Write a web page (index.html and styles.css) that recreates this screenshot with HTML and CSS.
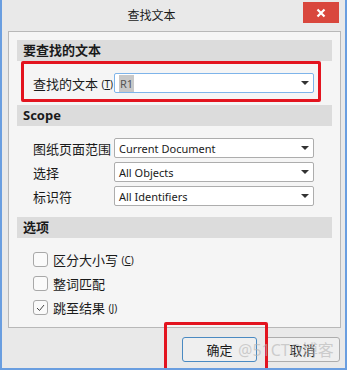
FILE: index.html
```html
<html>
  <head>
    <title>查找文本</title>
    <link rel="stylesheet" href="styles.css">
  </head>
  <body>
    <div class="window">
      <div class="titlebar">
        <div class="title">查找文本</div>
        <div class="close">
          <svg width="10" height="10" viewBox="0 0 10 10"><path d="M1.5 1.5 L8.5 8.5 M8.5 1.5 L1.5 8.5" stroke="#fff" stroke-width="2.2"/></svg>
        </div>
      </div>

      <div class="panel">
        <div class="section-head">要查找的文本</div>
        <div class="find-row">
          <div class="field">
            <span class="label">查找的文本 <span class="key">(<u>T</u>)</span></span>
            <div class="combo focus"><span class="value"><span class="sel">R1</span></span><span class="arrow"></span></div>
          </div>
        </div>

        <div class="section-head">Scope</div>
        <div class="rows">
          <div class="field">
            <span class="label">图纸页面范围</span>
            <div class="combo"><span class="value">Current Document</span><span class="arrow"></span></div>
          </div>
          <div class="field">
            <span class="label">选择</span>
            <div class="combo"><span class="value">All Objects</span><span class="arrow"></span></div>
          </div>
          <div class="field">
            <span class="label">标识符</span>
            <div class="combo"><span class="value">All Identifiers</span><span class="arrow"></span></div>
          </div>
        </div>

        <div class="section-head">选项</div>
        <div class="checks">
          <div class="check"><span class="box"></span><span>区分大小写 <span class="key">(<u>C</u>)</span></span></div>
          <div class="check"><span class="box"></span><span>整词匹配</span></div>
          <div class="check"><span class="box"><svg width="9" height="8" viewBox="0 0 9 8"><path d="M1 4 L3.5 6.5 L8 1" fill="none" stroke="#444" stroke-width="1"/></svg></span><span>跳至结果 <span class="key">(<u>J</u>)</span></span></div>
        </div>
      </div>

      <div class="buttons">
        <button class="btn default">确定</button>
        <button class="btn">取消</button>
      </div>

      <div class="mark-ok"></div>
      <div class="watermark">@51CTO博客</div>
    </div>
  </body>
</html>
```

FILE: styles.css
```css
body {
  margin: 0;
  font-family: "Noto Sans", "Noto Sans CJK SC", sans-serif;
  color: #1a1a1a;
}

/* ----------------------------------- Window */
.window {
  position: relative;
  width: 347px;
  height: 370px;
  box-sizing: border-box;
  background-color: #e9e9e9;
  border-left: 2px solid #6a9ee0;
  border-right: 2px solid #6a9ee0;
  border-bottom: 2px solid #6a9ee0;
  overflow: hidden;
}

.titlebar {
  display: flex;
  height: 31px;
}

.title {
  flex: 1;
  text-align: center;
  font-size: 12px;
  line-height: 31px;
  margin-left: -2px;
}

.close {
  width: 36px;
  height: 21px;
  margin-top: 2px;
  margin-right: 6px;
  background-color: #d9473d;
  display: flex;
  align-items: center;
  justify-content: center;
}
/* ----------------------------------- */

/* ----------------------------------- Panel */
.panel {
  margin: 0 4px 0 6px;
  padding: 8px 8px 12px 8px;
  background-color: #f5f5f5;
  border: 1px solid #b8b8b8;
}

.section-head {
  height: 21px;
  line-height: 21px;
  padding-left: 6px;
  background-color: #dcdcdc;
  font-size: 13px;
  font-weight: bold;
}

.find-row {
  height: 41px;
  box-sizing: border-box;
  margin: 0 11px 0 4px;
  padding: 9px 0 0 9px;
  border: 3px solid #e3141f;
  border-radius: 2px;
}

.find-row + .section-head {
  margin-top: 3px;
}

.rows {
  margin: 12px 0 11px 16px;
  display: flex;
  flex-direction: column;
  gap: 4px;
}

.field {
  display: flex;
  align-items: center;
  height: 20px;
}

.label {
  width: 81px;
  font-size: 13px;
  white-space: nowrap;
}

.key {
  font-size: 10px;
  vertical-align: 1px;
}

.combo {
  width: 200px;
  height: 20px;
  box-sizing: border-box;
  display: flex;
  align-items: center;
  padding: 0 4px 0 4px;
  background-color: #fff;
  border: 1px solid #adadad;
  border-radius: 2px;
  font-size: 11px;
}

.combo.focus {
  border-color: #7eb4ea;
}

.value {
  flex: 1;
}

.sel {
  background-color: #c8c8c8;
  color: #555;
  padding: 1px 1px;
}

.arrow {
  width: 0;
  height: 0;
  border-left: 4px solid transparent;
  border-right: 4px solid transparent;
  border-top: 4px solid #333;
}

.checks {
  margin: 14px 0 0 16px;
  display: flex;
  flex-direction: column;
  gap: 9px;
}

.check {
  display: flex;
  align-items: center;
  gap: 5px;
  height: 15px;
  font-size: 13px;
}

.box {
  width: 15px;
  height: 15px;
  box-sizing: border-box;
  border: 1px solid #a8a8a8;
  border-radius: 3px;
  background-color: #fafafa;
  display: flex;
  align-items: center;
  justify-content: center;
}
/* ----------------------------------- */

/* ----------------------------------- Buttons */
.buttons {
  display: flex;
  justify-content: flex-end;
  gap: 8px;
  margin-top: 9px;
  padding-right: 5px;
}

.btn {
  width: 75px;
  height: 25px;
  font-family: "Noto Sans CJK SC", sans-serif;
  font-size: 13px;
  color: #1a1a1a;
  background-color: #efefef;
  border: 1px solid #adadad;
  border-radius: 3px;
}

.btn.default {
  border-color: #4a8ac2;
}
/* ----------------------------------- */

/* ----------------------------------- Annotations */
.mark-ok {
  position: absolute;
  left: 162px;
  top: 322px;
  width: 104px;
  height: 52px;
  box-sizing: border-box;
  border: 3px solid #e3141f;
  border-radius: 2px;
}

.watermark {
  position: absolute;
  left: 236px;
  top: 337px;
  font-size: 16px;
  color: rgba(180, 180, 180, 0.6);
  white-space: nowrap;
}
/* ----------------------------------- */
```
